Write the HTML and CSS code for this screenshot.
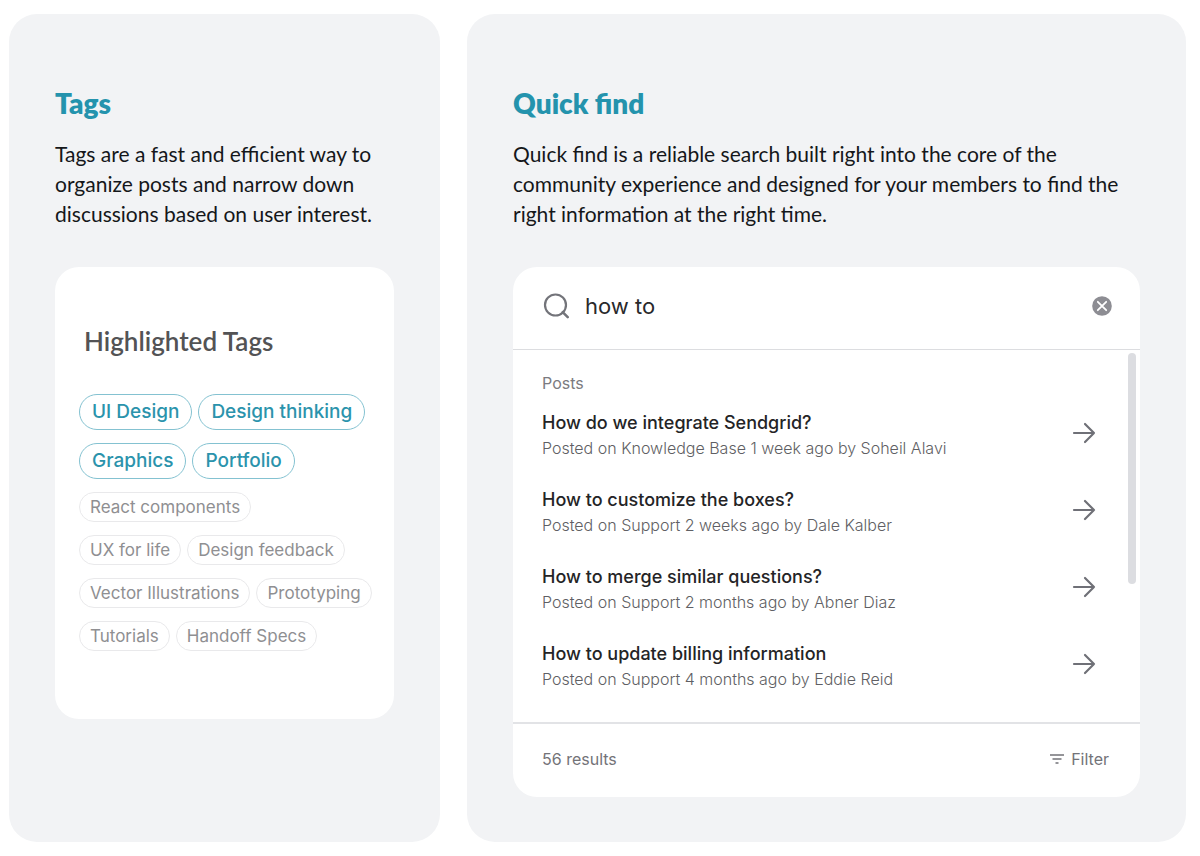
FILE: index.html
```html
<!DOCTYPE html>
<html lang="en">
<head>
<meta charset="utf-8">
<meta name="viewport" content="width=device-width, initial-scale=1">
<title>Tags and Quick find</title>
<link rel="stylesheet" href="styles.css">
</head>
<body>
<svg class="sprite" aria-hidden="true">
  <symbol id="arrow" viewBox="0 0 24 24"><path d="M2 12H22M13 3l9 9-9 9" fill="none" stroke="currentColor" stroke-width="2.2" stroke-linecap="round" stroke-linejoin="round"/></symbol>
</svg>
<main class="features">
  <section class="panel">
    <h2 class="panel-title">Tags</h2>
    <p class="panel-text">Tags are a fast and efficient way to organize posts and narrow down discussions based on user interest.</p>
    <div class="card tags-card">
      <h3 class="tags-title">Highlighted Tags</h3>
      <div class="tag-list">
        <a class="tag tag-large" href="#">UI Design</a>
        <a class="tag tag-large" href="#">Design thinking</a>
        <a class="tag tag-large" href="#">Graphics</a>
        <a class="tag tag-large" href="#">Portfolio</a>
      </div>
      <div class="tag-list">
        <a class="tag" href="#">React components</a>
      </div>
      <div class="tag-list">
        <a class="tag" href="#">UX for life</a>
        <a class="tag" href="#">Design feedback</a>
        <a class="tag" href="#">Vector Illustrations</a>
        <a class="tag" href="#">Prototyping</a>
        <a class="tag" href="#">Tutorials</a>
        <a class="tag" href="#">Handoff Specs</a>
      </div>
    </div>
  </section>
  <section class="panel">
    <h2 class="panel-title">Quick find</h2>
    <p class="panel-text">Quick find is a reliable search built right into the core of the community experience and designed for your members to find the right information at the right time.</p>
    <div class="card">
      <form class="search">
        <svg class="search-icon" viewBox="0 0 26 26" aria-hidden="true"><circle cx="12.500" cy="12" r="10.5" fill="none" stroke="currentColor" stroke-width="2.2"/><path d="M19.700 19.2l5 5" stroke="currentColor" stroke-width="2.5" stroke-linecap="round"/></svg>
        <input class="search-input" type="text" aria-label="Search" value="how to">
        <button class="clear" type="button" aria-label="Clear search"><svg viewBox="0 0 20 20" aria-hidden="true"><circle cx="10" cy="10" r="9.8" fill="#8d8d93"/><path d="M5.8 5.8l8.4 8.4M14.2 5.8l-8.4 8.4" stroke="#fff" stroke-width="1.8" stroke-linecap="round"/></svg></button>
      </form>
      <div class="results">
        <h3 class="results-label">Posts</h3>
        <ul class="posts">
          <li><a class="post" href="#"><span class="post-body"><span class="post-title">How do we integrate Sendgrid?</span><span class="post-meta">Posted on Knowledge Base 1 week ago by Soheil Alavi</span></span><svg class="arrow" aria-hidden="true"><use href="#arrow"/></svg></a></li>
          <li><a class="post" href="#"><span class="post-body"><span class="post-title">How to customize the boxes?</span><span class="post-meta">Posted on Support 2 weeks ago by Dale Kalber</span></span><svg class="arrow" aria-hidden="true"><use href="#arrow"/></svg></a></li>
          <li><a class="post" href="#"><span class="post-body"><span class="post-title">How to merge similar questions?</span><span class="post-meta">Posted on Support 2 months ago by Abner Diaz</span></span><svg class="arrow" aria-hidden="true"><use href="#arrow"/></svg></a></li>
          <li><a class="post" href="#"><span class="post-body"><span class="post-title">How to update billing information</span><span class="post-meta">Posted on Support 4 months ago by Eddie Reid</span></span><svg class="arrow" aria-hidden="true"><use href="#arrow"/></svg></a></li>
        </ul>
        <span class="scroll-thumb"></span>
      </div>
      <footer class="card-footer">
        <span>56 results</span>
        <button class="filter" type="button"><svg viewBox="0 0 16 12" aria-hidden="true"><path d="M1 2H15M3.5 6H12.5M6.500 10H9.500" stroke="currentColor" stroke-width="1.5"/></svg>Filter</button>
      </footer>
    </div>
  </section>
</main>
</body>
</html>
```
FILE: styles.css
```css
* {
  box-sizing: border-box;
}

body {
  margin: 0;
  background: #fff;
  color: #15171a;
  font-family: Inter, "Liberation Sans", sans-serif;
}

h2, h3, p, ul {
  margin: 0;
  padding: 0;
}

a {
  color: inherit;
  text-decoration: none;
}

button {
  padding: 0;
  border: 0;
  background: none;
  color: inherit;
  font: inherit;
  cursor: pointer;
}

.sprite {
  display: none;
}

.features {
  display: grid;
  grid-template-columns: 431fr 719fr;
  gap: 27px;
  padding: 14px 14px 14px 9px;
}

.panel {
  min-width: 0;
  padding: 71px 46px 45px;
  border-radius: 28px;
  background: #f2f3f5;
}

.panel-title {
  color: #2493ad;
  font-family: Lato, Inter, sans-serif;
  font-size: 28px;
  font-weight: 800;
  line-height: 36px;
}

.panel-text {
  margin: 18px 0 38px;
  font-family: Lato, Inter, sans-serif;
  font-size: 21px;
  line-height: 30px;
}

.card {
  overflow: hidden;
  border-radius: 24px;
  background: #fff;
}

.tags-card {
  padding: 58px 24px 68px;
}

.tags-title {
  margin: 0 0 37px 5px;
  color: #535355;
  font-family: Lato, Inter, sans-serif;
  font-size: 26px;
  font-weight: 600;
  line-height: 32px;
}

.tag-list {
  display: flex;
  flex-wrap: wrap;
  gap: 13px 6px;
  margin-right: -12px;
}

.tag-list + .tag-list {
  margin-top: 13px;
}

.tag {
  padding: 0 10px;
  border: 1px solid #e9e9eb;
  border-radius: 18px;
  color: #8f8f92;
  font-size: 17px;
  font-weight: 400;
  line-height: 28px;
}

.tag-large {
  padding: 0 12px;
  border-color: #84c2d1;
  color: #2b93ac;
  font-size: 19px;
  font-weight: 500;
  line-height: 34px;
}

.search {
  display: flex;
  align-items: center;
  height: 83px;
  padding: 0 28px 4px 30px;
  border-bottom: 1px solid #dcdde0;
}

.search-icon {
  width: 26px;
  height: 26px;
  color: #73747a;
}

.search-input {
  flex: 1;
  min-width: 0;
  padding: 0 16px;
  border: 0;
  outline: 0;
  background: none;
  color: #29292b;
  font: 400 22px/32px Inter, sans-serif;
}

.clear,
.clear svg {
  display: block;
  width: 20px;
  height: 20px;
}

.results {
  position: relative;
  padding: 21px 44px 30px 29px;
}

.results-label {
  color: #7b7b80;
  font-size: 16px;
  font-weight: 400;
  line-height: 24px;
}

.posts {
  display: grid;
  gap: 26px;
  margin-top: 15px;
  list-style: none;
}

.post {
  display: flex;
  align-items: flex-start;
  justify-content: space-between;
}

.post-body,
.post-title,
.post-meta {
  display: block;
}

.post-title {
  color: #242426;
  font-size: 18px;
  font-weight: 500;
  line-height: 26px;
}

.post-meta {
  color: #5f5f64;
  font-size: 16px;
  font-weight: 300;
  line-height: 25px;
}

.arrow {
  width: 24px;
  height: 24px;
  margin-top: 11px;
  flex: none;
  color: #6f7077;
}

.scroll-thumb {
  position: absolute;
  top: 3px;
  right: 4px;
  width: 8px;
  height: 62%;
  border-radius: 4px;
  background: #dcdde1;
}

.card-footer {
  display: flex;
  align-items: center;
  justify-content: space-between;
  height: 75px;
  padding: 0 31px 4px 29px;
  border-top: 2px solid #e2e3e6;
  color: #737378;
  font-size: 16px;
  line-height: 24px;
}

.filter {
  display: flex;
  align-items: center;
  gap: 6px;
}

.filter svg {
  width: 16px;
  height: 12px;
}

@media (max-width: 800px) {
  .features {
    grid-template-columns: 1fr;
  }
}
```
